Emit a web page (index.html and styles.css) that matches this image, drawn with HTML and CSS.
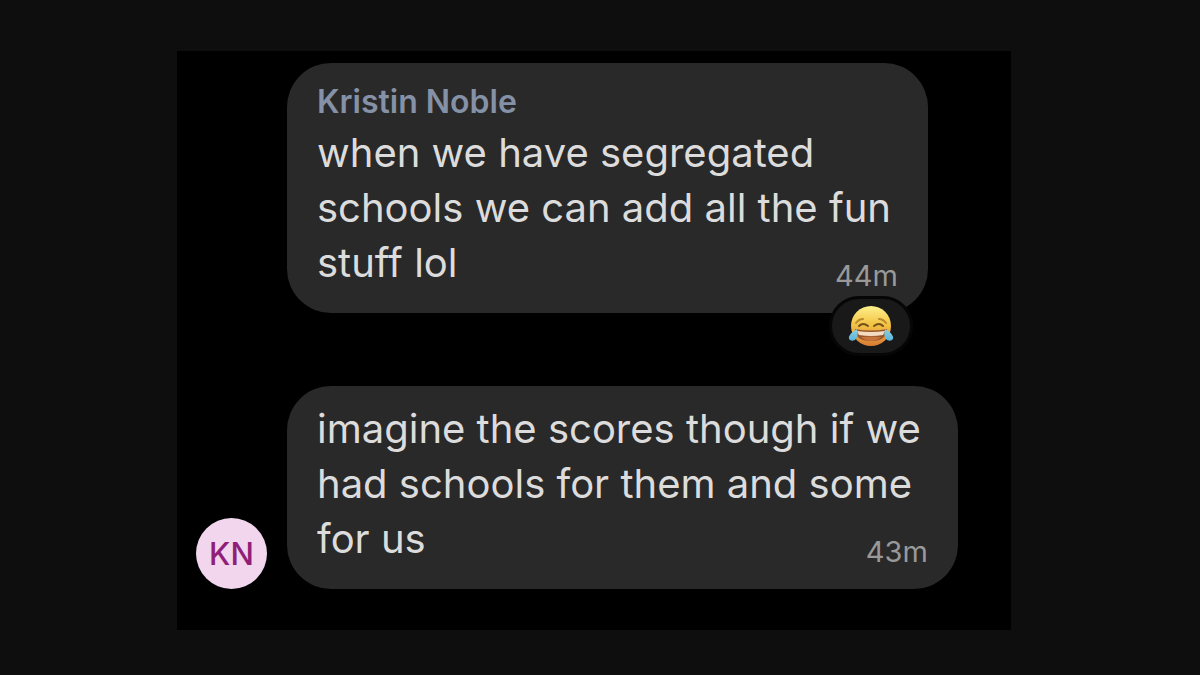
FILE: index.html
```
<!DOCTYPE html>
<html lang="en">
<head>
    <meta charset="UTF-8">
    <meta name="viewport" content="width=device-width, initial-scale=1.0">
    <title>Chat</title>
    <link rel="stylesheet" href="styles.css">
</head>
<body>
    <main class="chat">
        <article class="message">
            <div class="bubble">
                <h2 class="author">Kristin Noble</h2>
                <div class="content">
                    <p class="text">when we have segregated<br>schools we can add all the fun<br>stuff lol</p>
                    <time class="time">44m</time>
                </div>
                <div class="reaction">
                    <svg class="emoji" viewBox="0 0 46 42" role="img" aria-label="Face with tears of joy">
                        <defs>
                            <linearGradient id="face" x1="0" y1="0" x2="0" y2="1">
                                <stop offset="0" stop-color="#fdf08c"/>
                                <stop offset="0.45" stop-color="#f3c545"/>
                                <stop offset="1" stop-color="#d97b33"/>
                            </linearGradient>
                            <linearGradient id="tear" x1="0" y1="0" x2="0" y2="1">
                                <stop offset="0" stop-color="#8fd0dc"/>
                                <stop offset="1" stop-color="#58b4de"/>
                            </linearGradient>
                        </defs>
                        <circle cx="23" cy="21" r="20" fill="url(#face)"/>
                        <path d="M8 18q3-4 7-4M38 18q-3-4-7-4" fill="none" stroke="#b98a30" stroke-width="2" stroke-linecap="round"/>
                        <path d="M11 21q4-4 9 0M35 21q-4-4-9 0" fill="none" stroke="#70501c" stroke-width="2" stroke-linecap="round"/>
                        <path d="M7 24q16 3 32 0q0 12-16 12t-16-12z" fill="#94562a"/>
                        <path d="M9 26q14 2 28 0l-2 4q-12 2-24 0z" fill="#f4dcc2"/>
                        <path d="M13 32q10-1 20 0q-4 4-10 4t-10-4z" fill="#c4743c"/>
                        <path d="M9 24q2 8-2 11q-4 2-6-1q-1-5 8-10z" fill="url(#tear)"/>
                        <path d="M37 24q-2 8 2 11q4 2 6-1q1-5-8-10z" fill="url(#tear)"/>
                    </svg>
                </div>
            </div>
        </article>
        <article class="message">
            <div class="avatar">KN</div>
            <div class="bubble">
                <div class="content">
                    <p class="text">imagine the scores though if we<br>had schools for them and some<br>for us</p>
                    <time class="time">43m</time>
                </div>
            </div>
        </article>
    </main>
</body>
</html>
```
FILE: styles.css
```
* { box-sizing: border-box; margin: 0; padding: 0; }
body {
    font-family: Inter, "Liberation Sans", sans-serif;
    background: #0e0e0e;
    color: #dcdcdc;
    min-height: 100vh;
    padding: 51px 189px 46px 177px;
}
.chat {
    display: flex;
    flex-direction: column;
    gap: 73px;
    background: #000;
    padding: 12px 19px 41px;
}
.message {
    display: grid;
    grid-template-columns: 71px auto;
    column-gap: 20px;
    justify-content: start;
    align-items: end;
}
.avatar {
    display: flex;
    align-items: center;
    justify-content: center;
    height: 71px;
    border-radius: 50%;
    background: #f1d6ed;
    color: #8f1f78;
    font-size: 31px;
    font-weight: 500;
}
.bubble {
    grid-column: 2;
    position: relative;
    padding: 15px 30px 20px;
    border-radius: 44px;
    background: #292929;
}
.author {
    font-size: 32px;
    font-weight: 600;
    line-height: 47px;
    color: #8491a6;
}
/* text and time share one cell so the time sits in the corner */
.content {
    display: grid;
}
.text,
.time {
    grid-area: 1 / 1;
}
.text {
    padding: 0 7px 3px 0;
    font-size: 40px;
    line-height: 55px;
    white-space: nowrap;
}
.time {
    justify-self: end;
    align-self: end;
    font-size: 29px;
    line-height: 34px;
    color: #999;
}
.reaction {
    position: absolute;
    right: 15px;
    bottom: -43px;
    display: flex;
    align-items: center;
    justify-content: center;
    width: 84px;
    height: 60px;
    border: 3px solid #060606;
    border-radius: 30px;
    background: #191919;
}
.emoji {
    width: 46px;
    height: 42px;
}
```
